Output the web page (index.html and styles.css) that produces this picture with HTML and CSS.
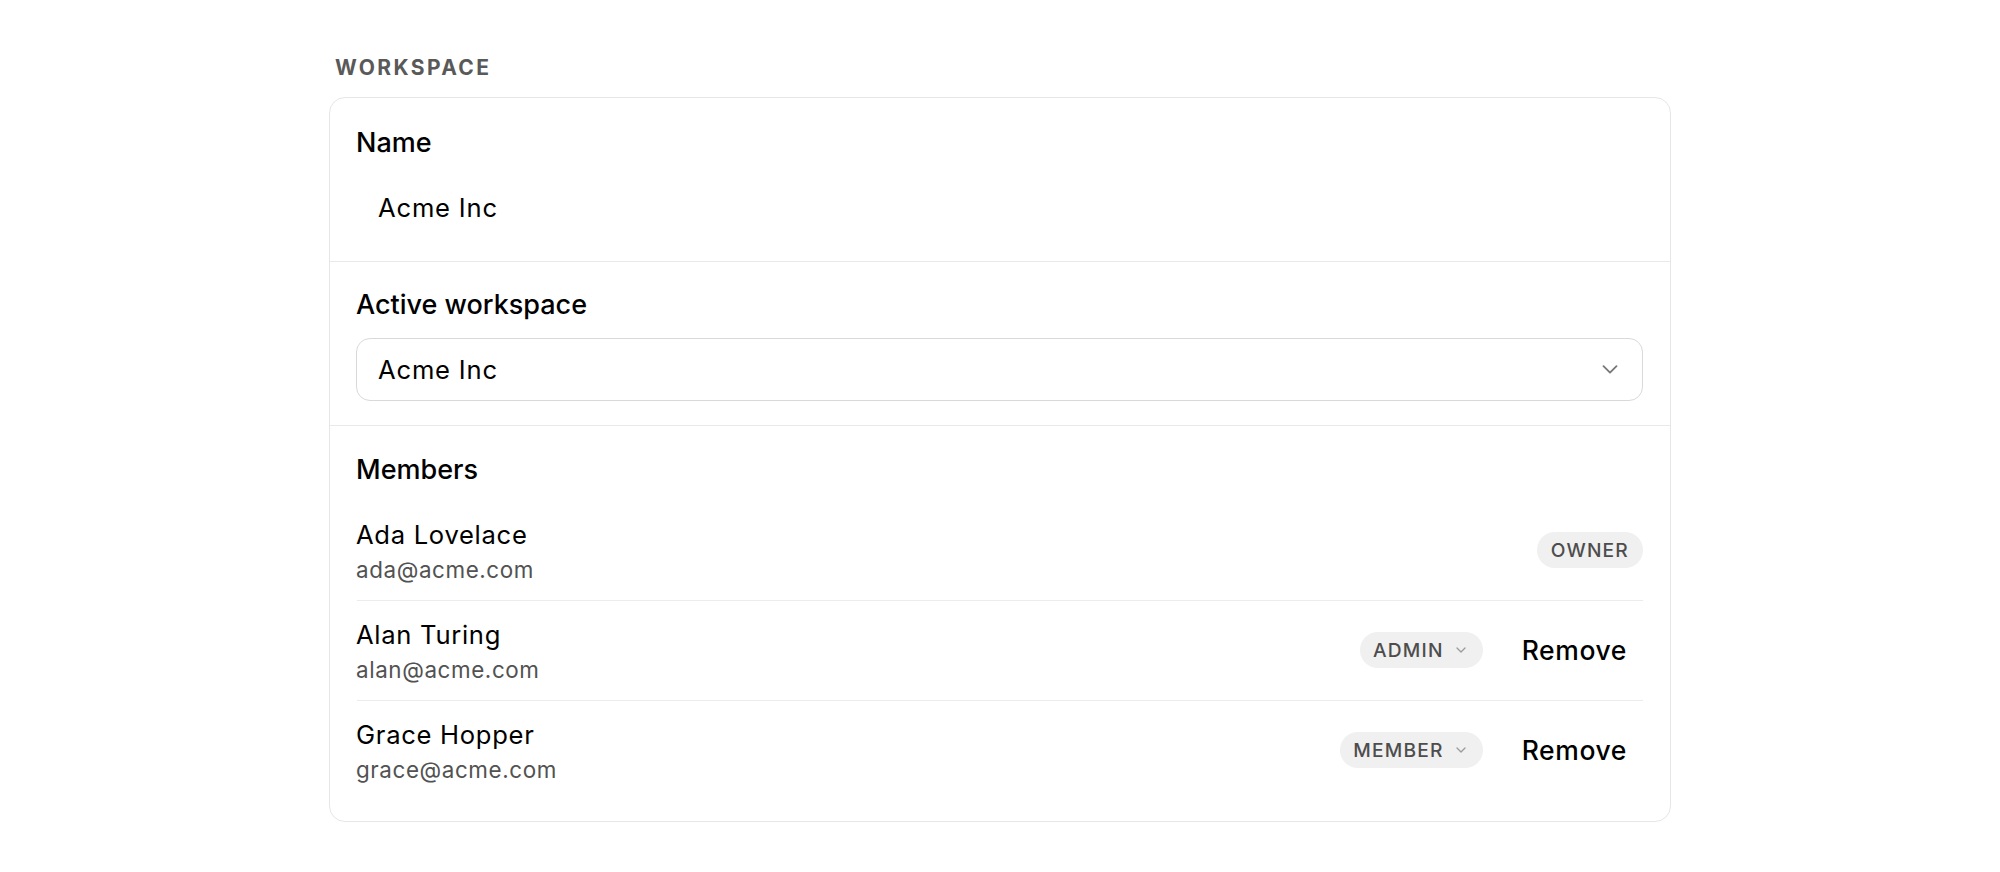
FILE: index.html
```html
<!DOCTYPE html>
<html lang="en">
<head>
<meta charset="utf-8">
<title>Workspace settings</title>
<link rel="stylesheet" href="styles.css">
</head>
<body>
<main class="page">
  <h2 class="group-title">WORKSPACE</h2>
  <section class="card">
    <div class="section">
      <label class="field-label" for="ws-name">Name</label>
      <input id="ws-name" class="plain-input" type="text" value="Acme Inc">
    </div>
    <div class="section">
      <div class="field-label">Active workspace</div>
      <div class="select" role="button">
        <span class="select-value">Acme Inc</span>
        <svg class="select-chevron" width="16" height="9" viewBox="0 0 16 9" aria-hidden="true"><path d="M1.5 1.2 L8 7.6 L14.5 1.2" fill="none" stroke="#777" stroke-width="1.8" stroke-linecap="round" stroke-linejoin="round"/></svg>
      </div>
    </div>
    <div class="section section-members">
      <div class="field-label">Members</div>
      <ul class="members">
        <li class="member">
          <div class="member-info">
            <div class="member-name">Ada Lovelace</div>
            <div class="member-email">ada@acme.com</div>
          </div>
          <div class="member-actions">
            <span class="pill">OWNER</span>
          </div>
        </li>
        <li class="member">
          <div class="member-info">
            <div class="member-name">Alan Turing</div>
            <div class="member-email">alan@acme.com</div>
          </div>
          <div class="member-actions">
            <span class="pill pill-menu">ADMIN<svg class="pill-chevron" width="10" height="6" viewBox="0 0 10 6" aria-hidden="true"><path d="M1 1 L5 5 L9 1" fill="none" stroke="#9a9a9a" stroke-width="1.3" stroke-linecap="round" stroke-linejoin="round"/></svg></span>
            <button class="remove-btn" type="button">Remove</button>
          </div>
        </li>
        <li class="member">
          <div class="member-info">
            <div class="member-name">Grace Hopper</div>
            <div class="member-email">grace@acme.com</div>
          </div>
          <div class="member-actions">
            <span class="pill pill-menu">MEMBER<svg class="pill-chevron" width="10" height="6" viewBox="0 0 10 6" aria-hidden="true"><path d="M1 1 L5 5 L9 1" fill="none" stroke="#9a9a9a" stroke-width="1.3" stroke-linecap="round" stroke-linejoin="round"/></svg></span>
            <button class="remove-btn" type="button">Remove</button>
          </div>
        </li>
      </ul>
    </div>
  </section>
</main>
</body>
</html>
```

FILE: styles.css
```css
* {
  box-sizing: border-box;
}

html, body {
  margin: 0;
  padding: 0;
  background: #ffffff;
}

body {
  font-family: Inter, "Noto Sans", "Liberation Sans", sans-serif;
  color: #000000;
}

.page {
  width: 1342px;
  margin: 0 auto;
  padding-top: 55px;
}

.group-title {
  margin: 0 0 16px 0;
  padding-left: 6px;
  font-size: 21px;
  line-height: 26px;
  font-weight: 700;
  letter-spacing: 2.4px;
  color: #595959;
}

.card {
  border: 1px solid #e6e6e6;
  border-radius: 16px;
  background: #ffffff;
}

.section {
  display: flex;
  flex-direction: column;
  padding: 29px 27px 22px 27px;
  border-bottom: 1px solid #e9e9e9;
}

.section:nth-child(2) {
  padding-top: 27px;
  padding-bottom: 24px;
}

.section-members {
  border-bottom: none;
  padding-top: 28px;
  padding-bottom: 21px;
}

.field-label {
  display: block;
  margin-left: -1px;
  font-size: 27px;
  line-height: 32px;
  font-weight: 500;
  color: #000000;
}

.plain-input {
  margin-top: 17px;
  height: 63px;
  width: 100%;
  border: 1px solid transparent;
  border-radius: 14px;
  padding: 0 20px;
  font-family: inherit;
  font-size: 25.6px;
  line-height: 30px;
  letter-spacing: 0.8px;
  color: #000000;
  background: transparent;
  outline: none;
}

.select {
  margin-top: 17px;
  height: 63px;
  margin-left: -1px;
  border: 1px solid #d9d9d9;
  border-radius: 14px;
  padding: 0 24px 0 21px;
  display: flex;
  align-items: center;
  justify-content: space-between;
}

.select-value {
  font-size: 25.6px;
  line-height: 30px;
  letter-spacing: 0.8px;
}

.select-chevron {
  display: block;
}

.members {
  list-style: none;
  margin: 15px 0 0 0;
  padding: 0;
}

.member {
  display: flex;
  align-items: center;
  justify-content: space-between;
  padding: 18px 0 15px 0;
  border-bottom: 1px solid #ececec;
}

.member:last-child {
  border-bottom: none;
}

.member-info {
  margin-left: -1px;
}

.member-name {
  font-size: 25.6px;
  line-height: 32px;
  font-weight: 400;
  letter-spacing: 0.7px;
}

.member-email {
  margin-top: 4px;
  font-size: 22.4px;
  line-height: 30px;
  letter-spacing: 0.6px;
  color: #525252;
}

.member-actions {
  display: flex;
  align-items: center;
  gap: 20px;
  padding-bottom: 4px;
}

.pill {
  display: inline-flex;
  align-items: center;
  height: 36px;
  padding: 0 14px;
  border-radius: 18px;
  background: #f0f0f0;
  font-size: 19.2px;
  font-weight: 500;
  letter-spacing: 1.2px;
  color: #4d4d4d;
}

.pill-menu {
  padding: 0 17px 0 13px;
  gap: 12px;
}

.pill-chevron {
  display: block;
}

.remove-btn {
  border: none;
  background: transparent;
  padding: 0 16px 0 19px;
  font-family: inherit;
  font-size: 26.5px;
  line-height: 36px;
  font-weight: 500;
  letter-spacing: 0.6px;
  color: #000000;
  cursor: pointer;
}
```
